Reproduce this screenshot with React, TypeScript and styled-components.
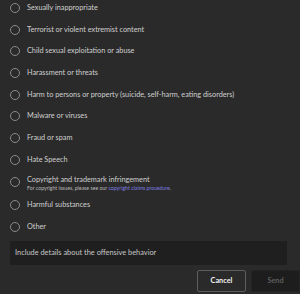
import React from "react";
import styled, { createGlobalStyle } from "styled-components";

const Global = createGlobalStyle`
  html, body { margin: 0; padding: 0; background: #2a2a2a; }
  body { font-family: "Lato", "Noto Sans", sans-serif; }
`;

const Page = styled.div`
  width: 300px;
  height: 294px;
  box-sizing: border-box;
  background: #2a2a2a;
  padding: 0 7px 0 10px;
  display: flex;
  flex-direction: column;
  overflow: hidden;
`;

const List = styled.div`
  display: flex;
  flex-direction: column;
  gap: 5.7px;
`;

const Row = styled.label`
  display: flex;
  align-items: flex-start;
  gap: 7px;
  min-height: 16px;
`;

const Radio = styled.span<{ $top?: number }>`
  flex: none;
  width: 8px;
  height: 8px;
  margin-top: ${(p) => p.$top ?? 3}px;
  border: 1px solid #8a8a8a;
  border-radius: 50%;
`;

const Texts = styled.div`
  display: flex;
  flex-direction: column;
`;

const Label = styled.span<{ $lh?: number }>`
  color: #cfcfcf;
  font-size: 7.3px;
  line-height: ${(p) => p.$lh ?? 16}px;
  white-space: nowrap;
`;

const Sub = styled.span`
  color: #b8b8b8;
  font-size: 5.2px;
  line-height: 7px;
  white-space: nowrap;
`;

const Link = styled.span`
  color: #7d7ee0;
`;

const Details = styled.div`
  margin-top: 6px;
  width: 277px;
  height: 24px;
  box-sizing: border-box;
  background: #1f1f1f;
  padding: 0 5px;
  display: flex;
  align-items: center;
  color: #c6c6c6;
  font-size: 7.4px;
`;

const Actions = styled.div`
  margin-top: 5px;
  margin-right: -7px;
  display: flex;
  justify-content: flex-end;
  gap: 5px;
`;

const Button = styled.button<{ $primary?: boolean }>`
  width: 49px;
  height: 22px;
  box-sizing: border-box;
  font-family: "Lato", sans-serif;
  font-size: 7.3px;
  font-weight: 700;
  border-radius: 2px;
  padding: 0;
  border: 1px solid ${(p) => (p.$primary ? "#232323" : "#5c5c5c")};
  background: ${(p) => (p.$primary ? "#1d1d1d" : "#2a2a2a")};
  color: ${(p) => (p.$primary ? "#5e5e5e" : "#f2f2f2")};
`;

const options = [
  "Sexually inappropriate",
  "Terrorist or violent extremist content",
  "Child sexual exploitation or abuse",
  "Harassment or threats",
  "Harm to persons or property (suicide, self-harm, eating disorders)",
  "Malware or viruses",
  "Fraud or spam",
  "Hate Speech",
];

export default function App() {
  return (
    <>
      <Global />
      <Page>
        <List>
          {options.map((o) => (
            <Row key={o}>
              <Radio />
              <Label>{o}</Label>
            </Row>
          ))}
          <Row>
            <Radio $top={3} />
            <Texts>
              <Label $lh={11}>Copyright and trademark infringement</Label>
              <Sub>
                For copyright issues, please see our <Link>copyright claims procedure</Link>.
              </Sub>
            </Texts>
          </Row>
          <Row>
            <Radio />
            <Label>Harmful substances</Label>
          </Row>
          <Row>
            <Radio />
            <Label>Other</Label>
          </Row>
        </List>
        <Details>Include details about the offensive behavior</Details>
        <Actions>
          <Button>Cancel</Button>
          <Button $primary>Send</Button>
        </Actions>
      </Page>
    </>
  );
}
